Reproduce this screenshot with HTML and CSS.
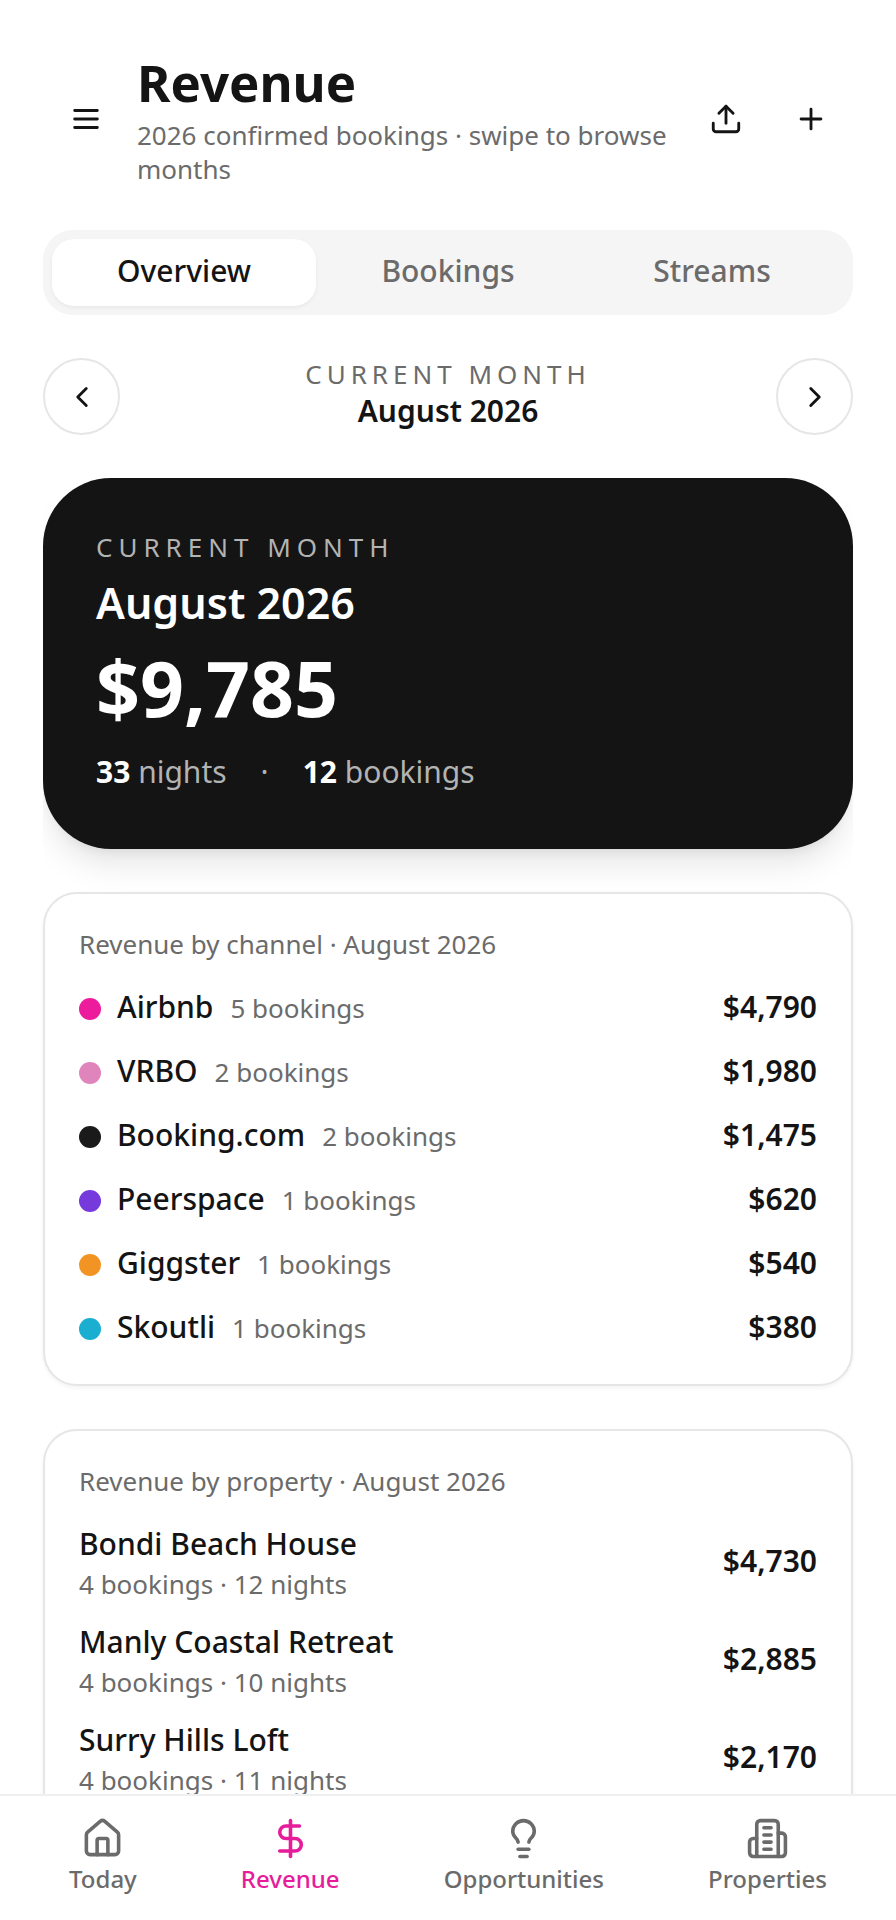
FILE: index.html
```html
<!DOCTYPE html>
<html lang="en">
<head>
    <meta charset="UTF-8">
    <meta name="viewport" content="width=device-width, initial-scale=1.0">
    <title>Revenue</title>
    <link rel="stylesheet" href="styles.css">
</head>
<body>
    <main class="page">
        <header class="header">
            <button class="icon-btn" type="button" aria-label="Menu">
                <svg class="icon" viewBox="0 0 24 24"><path d="M4 6h16M4 12h16M4 18h16"/></svg>
            </button>
            <div class="header-text">
                <h1>Revenue</h1>
                <p class="small">2026 confirmed bookings · swipe to browse months</p>
            </div>
            <div class="header-actions">
                <button class="icon-btn" type="button" aria-label="Export">
                    <svg class="icon" viewBox="0 0 24 24"><path d="M21 15v4a2 2 0 0 1-2 2H5a2 2 0 0 1-2-2v-4"/><path d="m17 8-5-5-5 5"/><path d="M12 3v12"/></svg>
                </button>
                <button class="icon-btn" type="button" aria-label="Add">
                    <svg class="icon" viewBox="0 0 24 24"><path d="M5 12h14M12 5v14"/></svg>
                </button>
            </div>
        </header>

        <div class="tabs" role="tablist">
            <button class="tab active" type="button" role="tab" aria-selected="true">Overview</button>
            <button class="tab" type="button" role="tab" aria-selected="false">Bookings</button>
            <button class="tab" type="button" role="tab" aria-selected="false">Streams</button>
        </div>

        <div class="month-nav">
            <button class="round-btn" type="button" aria-label="Previous month">
                <svg class="icon" viewBox="0 0 24 24"><path d="m15 18-6-6 6-6"/></svg>
            </button>
            <div class="month-text">
                <p class="month-label">Current month</p>
                <p class="month-name">August 2026</p>
            </div>
            <button class="round-btn" type="button" aria-label="Next month">
                <svg class="icon" viewBox="0 0 24 24"><path d="m9 18 6-6-6-6"/></svg>
            </button>
        </div>

        <div class="slider">
            <section class="hero">
                <p class="hero-label">Current month</p>
                <h2>August 2026</h2>
                <p class="hero-amount">$9,785</p>
                <div class="hero-stats">
                    <span><strong>33</strong> nights</span>
                    <span>·</span>
                    <span><strong>12</strong> bookings</span>
                </div>
            </section>
        </div>

        <section class="card">
            <h3 class="small">Revenue by channel · August 2026</h3>
            <ul class="list">
                <li class="row">
                    <span class="dot airbnb"></span>
                    <span class="channel"><span class="name">Airbnb</span><span class="count">5 bookings</span></span>
                    <span class="amount">$4,790</span>
                </li>
                <li class="row">
                    <span class="dot vrbo"></span>
                    <span class="channel"><span class="name">VRBO</span><span class="count">2 bookings</span></span>
                    <span class="amount">$1,980</span>
                </li>
                <li class="row">
                    <span class="dot booking"></span>
                    <span class="channel"><span class="name">Booking.com</span><span class="count">2 bookings</span></span>
                    <span class="amount">$1,475</span>
                </li>
                <li class="row">
                    <span class="dot peerspace"></span>
                    <span class="channel"><span class="name">Peerspace</span><span class="count">1 bookings</span></span>
                    <span class="amount">$620</span>
                </li>
                <li class="row">
                    <span class="dot giggster"></span>
                    <span class="channel"><span class="name">Giggster</span><span class="count">1 bookings</span></span>
                    <span class="amount">$540</span>
                </li>
                <li class="row">
                    <span class="dot skoutli"></span>
                    <span class="channel"><span class="name">Skoutli</span><span class="count">1 bookings</span></span>
                    <span class="amount">$380</span>
                </li>
            </ul>
        </section>

        <section class="card">
            <h3 class="small">Revenue by property · August 2026</h3>
            <ul class="list">
                <li class="row">
                    <div class="property">
                        <p class="name">Bondi Beach House</p>
                        <p class="small">4 bookings · 12 nights</p>
                    </div>
                    <span class="amount">$4,730</span>
                </li>
                <li class="row">
                    <div class="property">
                        <p class="name">Manly Coastal Retreat</p>
                        <p class="small">4 bookings · 10 nights</p>
                    </div>
                    <span class="amount">$2,885</span>
                </li>
                <li class="row">
                    <div class="property">
                        <p class="name">Surry Hills Loft</p>
                        <p class="small">4 bookings · 11 nights</p>
                    </div>
                    <span class="amount">$2,170</span>
                </li>
            </ul>
        </section>
    </main>

    <nav class="bottom-nav">
        <a class="nav-item" href="#today">
            <svg class="nav-icon" viewBox="0 0 24 24"><path d="M15 21v-8a1 1 0 0 0-1-1h-4a1 1 0 0 0-1 1v8"/><path d="M3 10a2 2 0 0 1 .709-1.528l7-5.999a2 2 0 0 1 2.582 0l7 5.999A2 2 0 0 1 21 10v9a2 2 0 0 1-2 2H5a2 2 0 0 1-2-2z"/></svg>
            Today
        </a>
        <a class="nav-item active" href="#revenue">
            <svg class="nav-icon" viewBox="0 0 24 24"><path d="M12 2v20"/><path d="M17 5H9.5a3.5 3.5 0 0 0 0 7h5a3.5 3.5 0 0 1 0 7H6"/></svg>
            Revenue
        </a>
        <a class="nav-item" href="#opportunities">
            <svg class="nav-icon" viewBox="0 0 24 24"><path d="M15 14c.2-1 .7-1.7 1.5-2.5 1-.9 1.5-2.2 1.5-3.5A6 6 0 0 0 6 8c0 1 .2 2.2 1.5 3.5.7.7 1.3 1.5 1.5 2.5"/><path d="M9 18h6"/><path d="M10 22h4"/></svg>
            Opportunities
        </a>
        <a class="nav-item" href="#properties">
            <svg class="nav-icon" viewBox="0 0 24 24"><path d="M6 22V4a2 2 0 0 1 2-2h8a2 2 0 0 1 2 2v18Z"/><path d="M6 12H4a2 2 0 0 0-2 2v6a2 2 0 0 0 2 2h2"/><path d="M18 9h2a2 2 0 0 1 2 2v9a2 2 0 0 1-2 2h-2"/><path d="M10 6h4M10 10h4M10 14h4M10 18h4"/></svg>
            Properties
        </a>
    </nav>
</body>
</html>
```
FILE: styles.css
```css
* {
    box-sizing: border-box;
}
body {
    margin: 0;
    height: 100vh;
    display: flex;
    flex-direction: column;
    font-family: "Noto Sans", sans-serif;
    font-size: 30px;
    line-height: 40px;
    color: #141414;
    background-color: #fff;
}
h1, h2, h3, p, ul {
    margin: 0;
    padding: 0;
}
button {
    font: inherit;
    color: inherit;
    background: none;
    border: none;
    padding: 0;
    cursor: pointer;
}
svg {
    fill: none;
    stroke: currentColor;
    stroke-width: 2;
    stroke-linecap: round;
    stroke-linejoin: round;
}
.page {
    flex: 1;
    min-height: 0;
    overflow-y: auto;
    scrollbar-width: none;
    padding: 51px 43px 43px;
}
.small {
    font-size: 26px;
    font-weight: 400;
    line-height: 34px;
    color: #6b6b6b;
}

/* Header */
.header {
    display: flex;
    align-items: center;
    gap: 9px;
    margin-bottom: 44px;
}
.header-text {
    flex: 1;
}
h1 {
    font-size: 51px;
    font-weight: 700;
    line-height: 63px;
    margin-bottom: 4px;
}
.header-actions {
    display: flex;
}
.icon-btn {
    display: flex;
    align-items: center;
    justify-content: center;
    width: 85px;
    height: 85px;
}
.icon {
    width: 34px;
    height: 34px;
}

/* Tabs */
.tabs {
    display: flex;
    padding: 9px;
    margin-bottom: 43px;
    border-radius: 30px;
    background-color: #f5f5f5;
}
.tab {
    flex: 1;
    padding: 12px 0 15px;
    border-radius: 22px;
    font-weight: 500;
    color: #6b6b6b;
}
.tab.active {
    color: #141414;
    background-color: #fff;
    box-shadow: 0 2px 4px rgba(0,0,0,0.05);
}

/* Month switcher */
.month-nav {
    display: flex;
    justify-content: space-between;
    margin-bottom: 43px;
}
.month-text {
    text-align: center;
}
.month-label {
    padding-bottom: 1px;
    font-size: 26px;
    line-height: 32px;
    letter-spacing: 5px;
    text-transform: uppercase;
    color: #6b6b6b;
}
.month-name {
    font-weight: 600;
}
.round-btn {
    display: flex;
    align-items: center;
    justify-content: center;
    width: 77px;
    height: 77px;
    border: 2px solid #e6e6e6;
    border-radius: 50%;
    background-color: #fff;
}

/* Month summary */
.slider {
    overflow-x: clip;
    margin-bottom: 43px;
}
.hero {
    padding: 52px 53px;
    border-radius: 68px;
    color: #fff;
    background-color: #141414;
    box-shadow: 0 21px 32px -6px rgba(0,0,0,0.1), 0 8px 13px -8px rgba(0,0,0,0.1);
}
.hero-label {
    font-size: 26px;
    line-height: 34px;
    letter-spacing: 6px;
    text-transform: uppercase;
    color: #b3b3b3;
}
h2 {
    margin-top: 9px;
    font-size: 43px;
    font-weight: 600;
    line-height: 60px;
}
.hero-amount {
    margin-top: 12px;
    font-size: 77px;
    font-weight: 700;
    line-height: 85px;
}
.hero-stats {
    display: flex;
    gap: 34px;
    margin-top: 22px;
    padding-bottom: 5px;
    color: #b3b3b3;
}
.hero-stats strong {
    color: #fff;
}

/* Cards */
.card {
    padding: 33px 34px 34px;
    margin-bottom: 43px;
    border: 2px solid #e6e6e6;
    border-radius: 34px;
    background-color: #fff;
    box-shadow: 0 2px 4px rgba(0,0,0,0.05);
}
.list {
    display: flex;
    flex-direction: column;
    gap: 21px;
    margin-top: 26px;
    list-style: none;
}
.row {
    display: flex;
    align-items: center;
    gap: 16px;
}
.channel {
    flex: 1;
    display: flex;
    align-items: baseline;
    gap: 17px;
}
.property {
    flex: 1;
}
.name {
    padding-bottom: 3px;
    font-weight: 500;
}
.count {
    font-size: 26px;
    color: #6b6b6b;
}
.amount {
    padding-bottom: 3px;
    font-weight: 600;
}
.dot {
    width: 22px;
    height: 22px;
    border-radius: 50%;
}
.airbnb {
    background-color: #ec1c9c;
}
.vrbo {
    background-color: #e084bc;
}
.booking {
    background-color: #1a1a1a;
}
.peerspace {
    background-color: #7639db;
}
.giggster {
    background-color: #f29424;
}
.skoutli {
    background-color: #1aafd0;
}

/* Bottom navigation */
.bottom-nav {
    display: flex;
    justify-content: space-around;
    padding: 21px 17px 25px;
    border-top: 2px solid #f0f0f0;
    background-color: #fff;
}
.nav-item {
    display: flex;
    flex-direction: column;
    align-items: center;
    gap: 3px;
    font-size: 24px;
    font-weight: 500;
    line-height: 32px;
    color: #6b6b6b;
    text-decoration: none;
}
.nav-item.active {
    color: #e61c9a;
}
.nav-icon {
    width: 43px;
    height: 43px;
}
```
